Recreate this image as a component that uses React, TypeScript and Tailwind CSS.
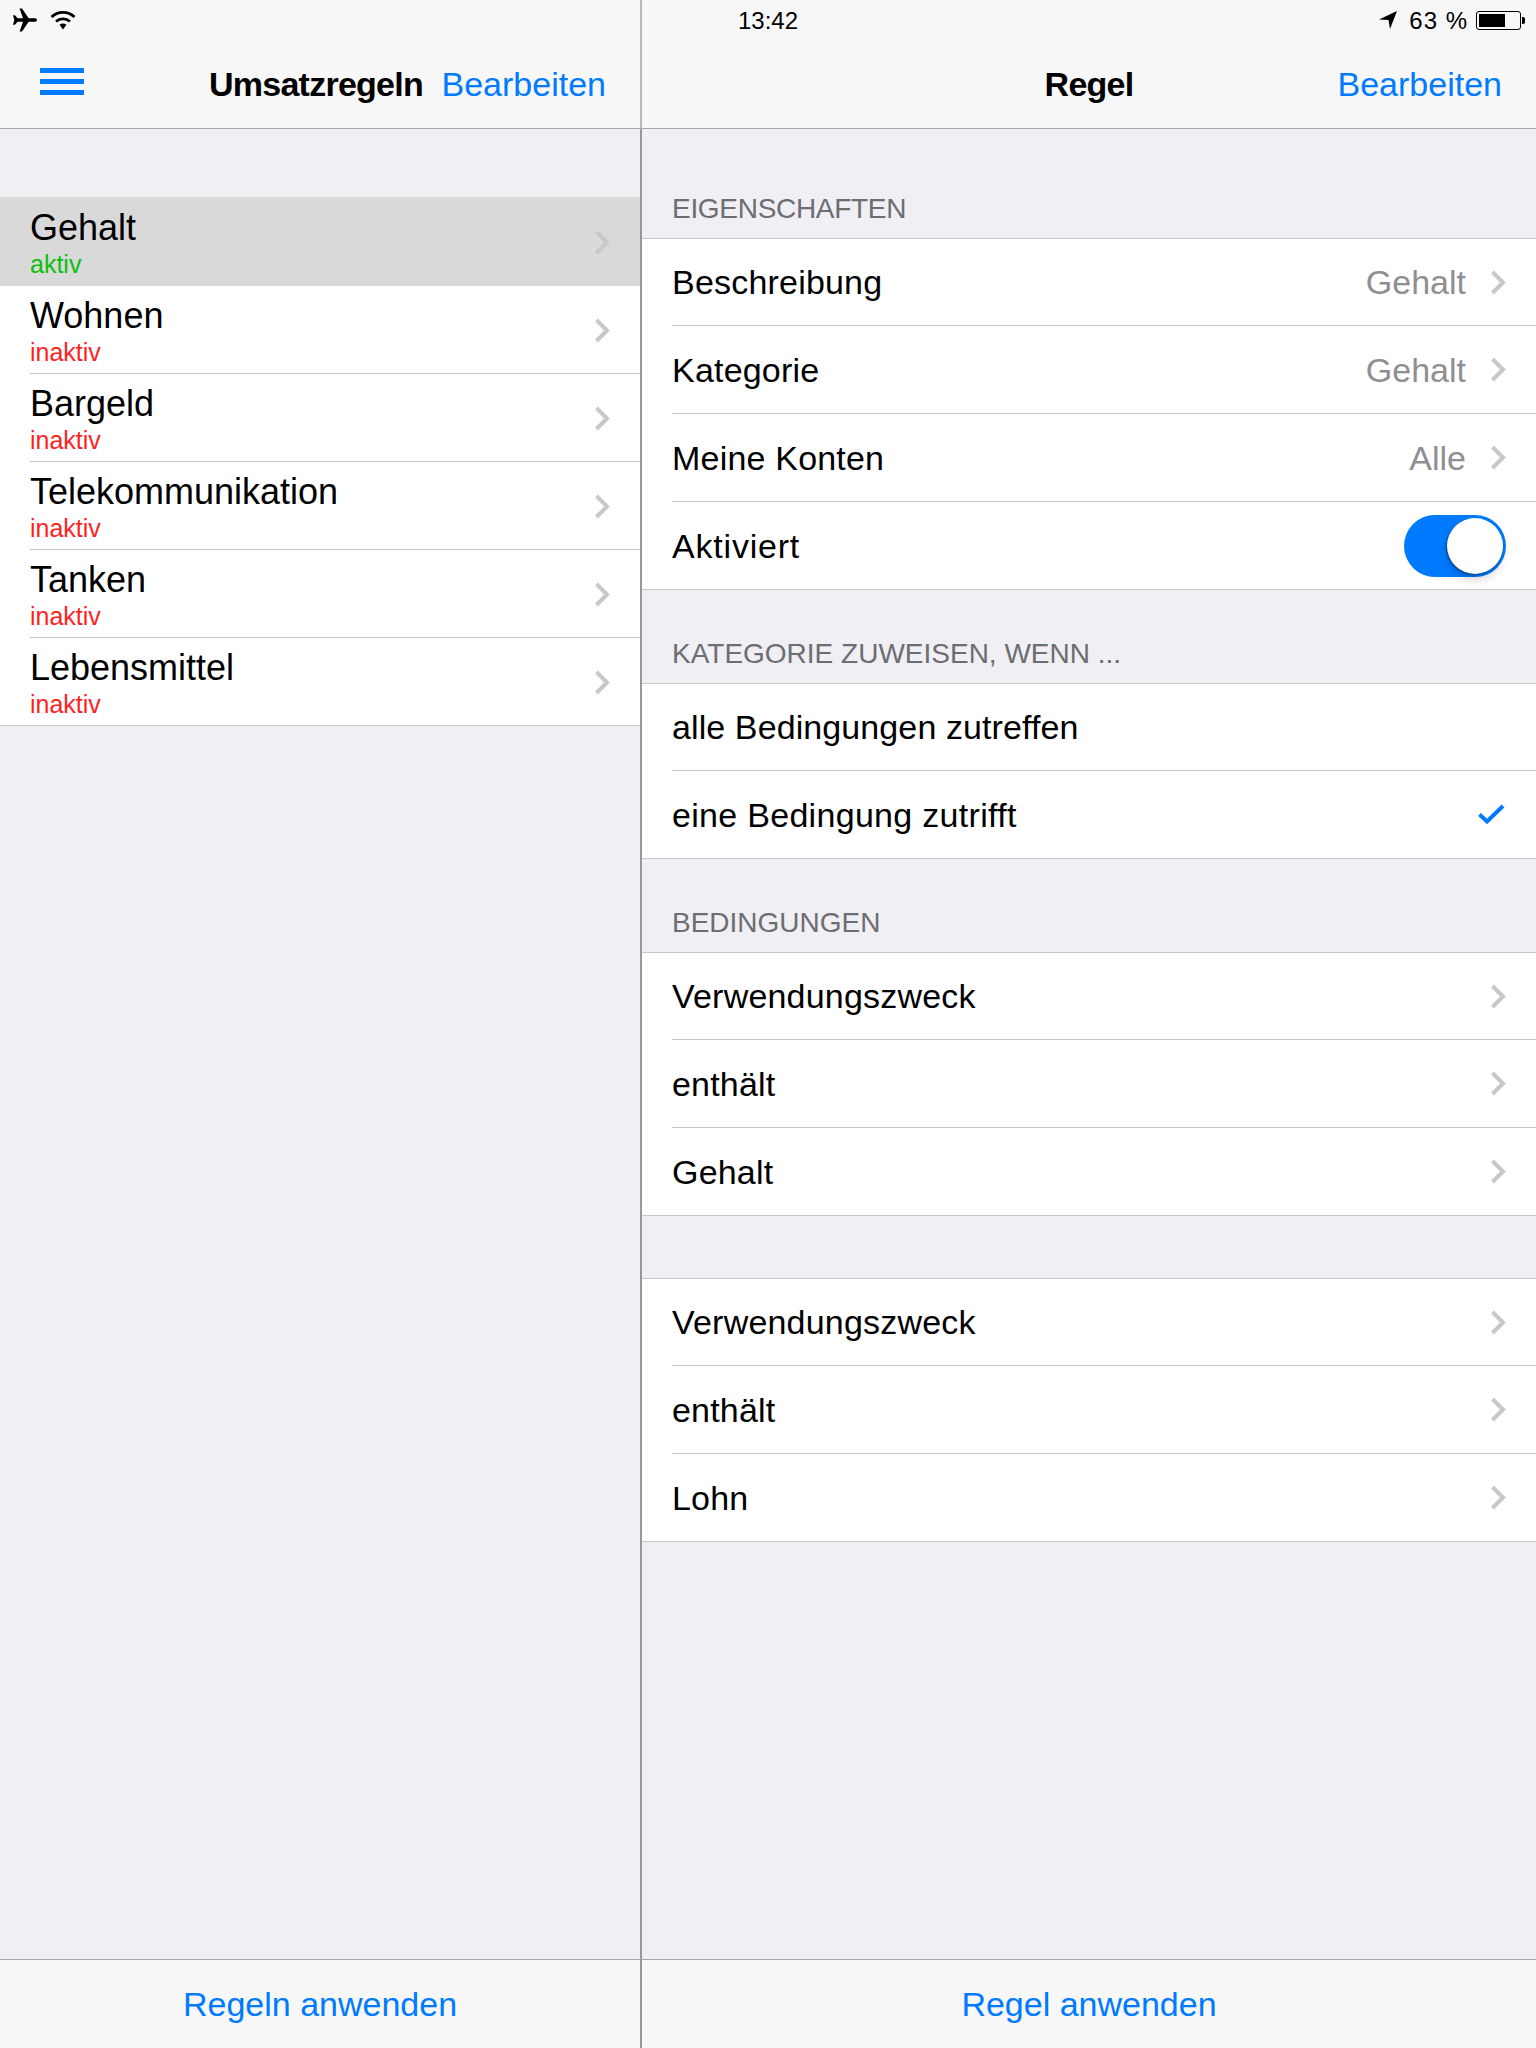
import type { ReactNode } from "react";

const BLUE = "text-[#007aff]";

function Chevron({ className = "" }: { className?: string }) {
  return (
    <svg width="16" height="25" viewBox="0 0 16 25" className={`shrink-0 ${className}`}>
      <path d="M2.5 2 L13 12.5 L2.5 23" fill="none" stroke="#c7c7cc" strokeWidth="4" />
    </svg>
  );
}

function Plane() {
  return (
    <svg width="26" height="26" viewBox="0 0 26 26">
      <path d="M25 13c0-1.3-1.2-1.8-2.6-1.8h-5.7L10 1.5H7.6l3.4 9.7H5.6L3 8.2H1l1.3 4.8L1 17.8h2l2.6-3h5.4L7.6 24.5H10l6.7-9.7h5.7c1.4 0 2.6-.5 2.6-1.8z" fill="#000" />
    </svg>
  );
}

function Wifi() {
  return (
    <svg width="26" height="22" viewBox="0 0 26 22">
      <path d="M1.5 8C8 1.8 18 1.8 24.5 8M6 12.5c4-3.4 10-3.4 14 0" fill="none" stroke="#000" strokeWidth="2.8" />
      <path d="M9.5 15.8c2.2-1.6 4.8-1.6 7 0L13 20.5z" fill="#000" />
    </svg>
  );
}

function Arrow() {
  return (
    <svg width="20" height="20" viewBox="0 0 20 20">
      <path d="M19 1 L1 9.5 L10.5 10 L12 19 Z" fill="#000" />
    </svg>
  );
}

function Battery() {
  return (
    <div className="flex items-center">
      <div className="w-[45px] h-[19px] rounded-[3px] border border-black p-[2px]">
        <div className="w-[26px] h-full bg-black" />
      </div>
      <div className="w-[3px] h-[7px] bg-black rounded-r-[2px] ml-[1px]" />
    </div>
  );
}

function Nav({ status, children, divider = false }: { status: ReactNode; children: ReactNode; divider?: boolean }) {
  return (
    <div className={`h-[129px] bg-[#f7f7f8] border-b border-[#a7a7aa] flex flex-col shrink-0 ${divider ? "border-r-2 border-r-[#b8b8bb]" : ""}`}>
      <div className="h-[40px] flex items-center shrink-0">{status}</div>
      <div className="h-[88px] flex items-center text-[34px] leading-[44px]">{children}</div>
    </div>
  );
}

function ListRow({ title, sub, color, selected }: { title: string; sub: string; color: string; selected?: boolean }) {
  return (
    <div className={`flex items-center pl-[30px] pr-[30px] ${selected ? "h-[89px] bg-[#d9d9d9]" : "h-[87px] bg-white"}`}>
      <div className="flex-1 min-w-0 flex flex-col pt-[2px]">
        <div className="text-[36px] leading-[40px] text-black">{title}</div>
        <div className={`text-[25px] leading-[26px] mt-[3px] ${color}`}>{sub}</div>
      </div>
      <Chevron className="mt-[2px]" />
    </div>
  );
}

function Sep() {
  return (
    <div className="h-px bg-white pl-[30px]">
      <div className="h-px bg-[#c8c7cc]" />
    </div>
  );
}

function Cell({ label, value, chevron = true, check = false, toggle = false, labelClass = "tracking-[0.2px]" }: { label: string; value?: string; chevron?: boolean; check?: boolean; toggle?: boolean; labelClass?: string }) {
  return (
    <div className="h-[87px] bg-white flex items-center pl-[30px] pr-[30px]">
      <div className={`flex-1 text-[34px] text-black leading-[40px] ${labelClass}`}>{label}</div>
      {value && <div className="text-[34px] text-[#8e8e93] leading-[40px] mr-[24px]">{value}</div>}
      {toggle && (
        <div className="w-[102px] h-[62px] rounded-full bg-[#007aff] p-[3px] flex justify-end">
          <div className="w-[56px] h-[56px] rounded-full bg-white shadow-[0_6px_9px_rgba(0,0,0,0.16),-1px_1px_2px_rgba(0,0,0,0.4)]" />
        </div>
      )}
      {check && (
        <svg width="27" height="21" viewBox="0 0 27 21" className="mr-[1px]">
          <path d="M1.5 10.5 L9 17.5 L25 2" fill="none" stroke="#007aff" strokeWidth="4" />
        </svg>
      )}
      {chevron && !toggle && !check && <Chevron />}
    </div>
  );
}

function Group({ children }: { children: ReactNode }) {
  return <div className="border-y border-[#c8c7cc] bg-white [&>div:first-child]:h-[86px]">{children}</div>;
}

function Head({ children, className = "" }: { children: ReactNode; className?: string }) {
  return (
    <div className={`h-[48px] pl-[30px] text-[28px] leading-[38px] text-[#6d6d72] ${className}`}>{children}</div>
  );
}

function Toolbar({ label, divider = false }: { label: string; divider?: boolean }) {
  return (
    <div className={`h-[89px] border-t border-[#a7a7aa] bg-[#f7f7f8] flex items-center justify-center text-[34px] shrink-0 ${BLUE} ${divider ? "border-r-2 border-r-[#98989b]" : ""}`}>
      {label}
    </div>
  );
}

export default function App() {
  const rows = ["Wohnen", "Bargeld", "Telekommunikation", "Tanken", "Lebensmittel"];
  return (
    <div className="w-[1536px] h-[2048px] flex bg-[#efeff4] overflow-hidden font-['Liberation_Sans',sans-serif]">
      <div className="w-[642px] shrink-0 flex flex-col">
        <Nav
          divider
          status={
            <div className="pl-[12px] flex items-center gap-[12px]">
              <Plane />
              <Wifi />
            </div>
          }
        >
          <div className="ml-[40px] -mt-[5px] w-[44px] flex flex-col gap-[6px]">
            <div className="h-[5px] bg-[#007aff]" />
            <div className="h-[5px] bg-[#007aff]" />
            <div className="h-[5px] bg-[#007aff]" />
          </div>
          <span className="ml-[125px] flex-1 font-bold text-black tracking-[-0.75px]">Umsatzregeln</span>
          <span className={`mr-[34px] ${BLUE}`}>Bearbeiten</span>
        </Nav>
        <div className="flex-1 pt-[68px] border-r-2 border-[#98989b]">
          <ListRow title="Gehalt" sub="aktiv" color="text-[#0cbf0c]" selected />
          {rows.map((title, i) => (
            <div key={title}>
              <ListRow title={title} sub="inaktiv" color="text-[#ff1f1f]" />
              {i < rows.length - 1 ? <Sep /> : <div className="h-px bg-[#c8c7cc]" />}
            </div>
          ))}
        </div>
        <Toolbar label="Regeln anwenden" divider />
      </div>
      <div className="flex-1 flex flex-col min-w-0">
        <Nav
          status={
            <div className="w-full flex items-center pl-[96px] pr-[11px] text-[24px] text-black">
              <span className="flex-1 pt-[1px]">13:42</span>
              <Arrow />
              <span className="ml-[11px] mr-[8px] tracking-[1px] pt-[1px]">63 %</span>
              <Battery />
            </div>
          }
        >
          <div className="w-full grid grid-cols-3 items-center">
            <span />
            <span className="text-center font-bold text-black tracking-[-0.75px]">Regel</span>
            <span className={`text-right pr-[34px] ${BLUE}`}>Bearbeiten</span>
          </div>
        </Nav>
        <div className="flex-1 pt-[61px]">
          <Head className="tracking-[-0.3px]">EIGENSCHAFTEN</Head>
          <Group>
            <Cell label="Beschreibung" value="Gehalt" />
            <Sep />
            <Cell label="Kategorie" value="Gehalt" />
            <Sep />
            <Cell label="Meine Konten" value="Alle" />
            <Sep />
            <Cell label="Aktiviert" toggle labelClass="tracking-[0.8px]" />
          </Group>
          <div className="mt-[45px]">
            <Head>KATEGORIE ZUWEISEN, WENN ...</Head>
          </div>
          <Group>
            <Cell label="alle Bedingungen zutreffen" chevron={false} labelClass="tracking-[0.1px]" />
            <Sep />
            <Cell label="eine Bedingung zutrifft" check labelClass="tracking-[0.3px]" />
          </Group>
          <div className="mt-[45px]">
            <Head>BEDINGUNGEN</Head>
          </div>
          <Group>
            <Cell label="Verwendungszweck" />
            <Sep />
            <Cell label="enthält" />
            <Sep />
            <Cell label="Gehalt" />
          </Group>
          <div className="h-[62px]" />
          <Group>
            <Cell label="Verwendungszweck" />
            <Sep />
            <Cell label="enthält" />
            <Sep />
            <Cell label="Lohn" />
          </Group>
        </div>
        <Toolbar label="Regel anwenden" />
      </div>
    </div>
  );
}
